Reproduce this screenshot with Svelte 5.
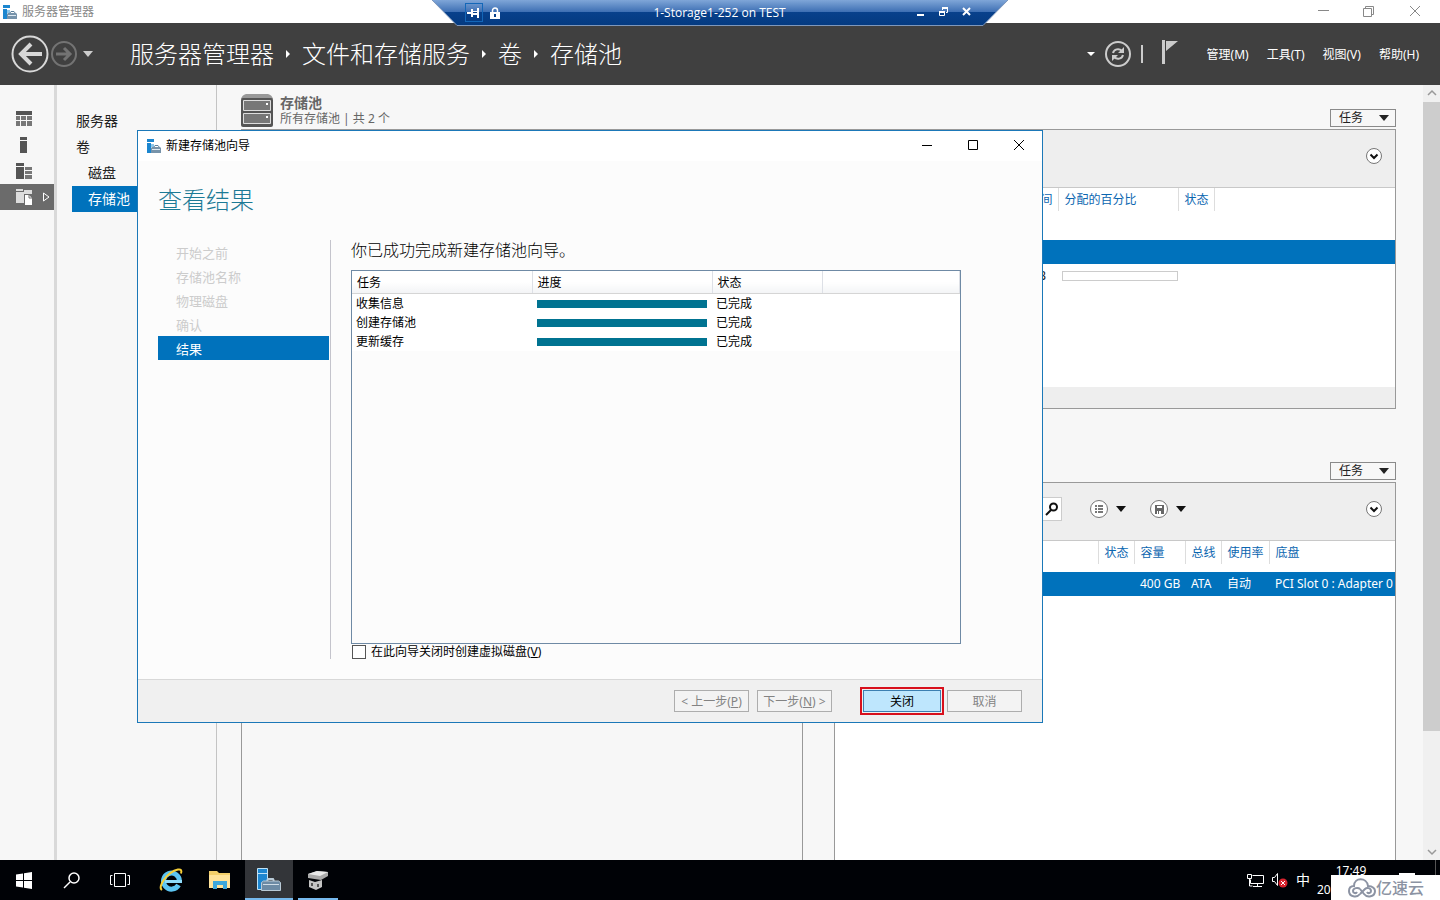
<script lang="ts">
	const crumbs = ['服务器管理器', '文件和存储服务', '卷', '存储池'];
	const menus = ['管理(M)', '工具(T)', '视图(V)', '帮助(H)'];
	const navItems = [
		{ label: '服务器' },
		{ label: '卷' },
		{ label: '磁盘', sub: true },
		{ label: '存储池', sub: true, active: true }
	];
	const steps = ['开始之前', '存储池名称', '物理磁盘', '确认', '结果'];
	const tasks = [
		{ name: '收集信息', progress: 100, status: '已完成' },
		{ name: '创建存储池', progress: 100, status: '已完成' },
		{ name: '更新缓存', progress: 100, status: '已完成' }
	];
	let createDisk = $state(false);
</script>

{#snippet managerIcon()}
	<svg class="app-icon" width="16" height="16" viewBox="0 0 16 16" aria-hidden="true">
		<path d="M1 1h7v3H1zM1 5h4v10H1z" fill="#1c86cf" />
		<path d="M5 6h3v3H5z" fill="#8cc6ea" />
		<path d="M7.500 9.500 9 7.500h3l1.500 2" fill="none" stroke="#5b7f9b" />
		<path d="m5 10 1-1h8l1 1v5H5z" fill="#7793aa" />
		<path d="M6 11.500h8" stroke="#dce8f1" />
	</svg>
{/snippet}

{#snippet chevron()}
	<button class="bare" aria-label="折叠">
		<svg width="18" height="18" viewBox="0 0 18 18">
			<circle cx="9" cy="9" r="7.500" fill="#fff" stroke="#777" />
			<path d="M5.500 7.500 9 11l3.500-3.500" fill="none" stroke="#111" stroke-width="2" />
		</svg>
	</button>
{/snippet}

{#snippet taskMenu()}
	<button class="task-menu">任务 <i class="down"></i></button>
{/snippet}

<div class="desktop">
	<header class="titlebar">
		{@render managerIcon()}
		<span>服务器管理器</span>
		<div class="win-controls">
			<button class="bare" aria-label="最小化"><svg width="12" height="12"><path d="M1 4.500h11" stroke="#888" /></svg></button>
			<button class="bare" aria-label="还原">
				<svg width="12" height="12" fill="none" stroke="#888"><path d="M.5 2.500h8v8h-8zM2.500 2.500v-2h8v8h-2" /></svg>
			</button>
			<button class="bare" aria-label="关闭窗口"><svg width="12" height="12"><path d="m1 0 10 10M11 0 1 10" stroke="#888" /></svg></button>
		</div>
	</header>

	<div class="toolbar">
		<button class="bare" aria-label="后退">
			<svg width="38" height="38" viewBox="0 0 38 38" fill="none" stroke="#d8d8d8">
				<circle cx="19" cy="19" r="17.500" stroke-width="2" />
				<path d="M31 19H10" stroke-width="4" />
				<path d="m20 9-10 10 10 10" stroke-width="4" />
			</svg>
		</button>
		<button class="bare forward" aria-label="前进">
			<svg width="26" height="26" viewBox="0 0 26 26" fill="none" stroke="#737373">
				<circle cx="13" cy="13" r="12" stroke-width="2" />
				<path d="M5 13h14M13 7l6 6-6 6" stroke-width="3" />
			</svg>
		</button>
		<button class="bare history" aria-label="历史记录"><i class="down"></i></button>
		<nav class="crumbs" aria-label="位置">
			{#each crumbs as crumb, i (crumb)}
				{#if i > 0}<i class="right"></i>{/if}
				<a href="#{crumb}">{crumb}</a>
			{/each}
		</nav>
		<div class="actions">
			<i class="down small"></i>
			<button class="bare" aria-label="刷新">
				<svg width="26" height="26" viewBox="0 0 26 26" fill="none" stroke="#ccc">
					<circle cx="13" cy="13" r="12" stroke-width="2" />
					<path d="M8 12c1-4 6-5 9-2M18 14c-1 4-6 5-9 2" stroke-width="2" />
					<path d="M19 6v6h-6zM7 20v-6h6z" fill="#ccc" stroke="none" />
				</svg>
			</button>
			<i class="bar"></i>
			<button class="bare flag" aria-label="通知">
				<svg width="18" height="26" viewBox="0 0 18 26"><path d="M1 1h3v24H1zM5 2h12L5 12z" fill="#ccc" /></svg>
			</button>
		</div>
		<nav class="menus" aria-label="菜单">
			{#each menus as menu (menu)}
				<button class="bare">{menu}</button>
			{/each}
		</nav>
	</div>

	<div class="workspace">
		<nav class="rail" aria-label="角色">
			<a href="#dashboard" aria-label="仪表板">
				<svg width="16" height="16" fill="#777"><path d="M0 0h16v4H0z" fill="#555" /><path d="M0 5h4v4H0zM5 5h5v4H5zM11 5h5v4h-5zM0 10h4v5H0zM5 10h5v5H5zM11 10h5v5h-5z" /></svg>
			</a>
			<a href="#local" aria-label="本地服务器">
				<svg width="16" height="16" fill="#555"><path d="M4 0h7v3H4zM4 4h7v12H4z" /></svg>
			</a>
			<a href="#all" aria-label="所有服务器">
				<svg width="16" height="16" fill="#555"><path d="M0 0h8v3H0zM0 4h8v12H0z" /><path d="M9 4h7v3H9zM9 8h7v3H9zM9 12h7v4H9z" fill="#777" /></svg>
			</a>
			<a href="#storage" class="active" aria-label="文件和存储服务">
				<svg width="16" height="16" fill="#ddd"><path d="M0 0h7v2H0zM0 3h8v11H0zM8 1h8v4H8z" /><path d="M9 6h4l3 3v7H9z" fill="#fff" /><path d="M13 6v3h3" fill="none" stroke="#707070" /></svg>
				<svg class="expand" width="8" height="10"><path d="M1.500 1v8L7 5z" fill="none" stroke="#fff" /></svg>
			</a>
		</nav>

		<nav class="side" aria-label="导航">
			{#each navItems as item (item.label)}
				<a href="#{item.label}" class:sub={item.sub} class:active={item.active}>{item.label}</a>
			{/each}
		</nav>

		<main class="content">
			<section class="tile wide">
				<div class="tile-head">
					<svg width="32" height="33" viewBox="0 0 32 33">
						<path d="M5 0h22q4 1 5 5H0q1-4 5-5z" fill="#999" />
						<rect y="4" width="32" height="29" rx="2" fill="#555" />
						<path d="M2.500 6.500h27v10h-27zM2.500 19.500h27v10h-27z" fill="#777" stroke="#ddd" />
						<path d="M25 9h2v2h-2zM25 22h2v2h-2z" fill="#fff" />
					</svg>
					<div class="tile-title">
						<h2>存储池</h2>
						<p>所有存储池 | 共 2 个</p>
					</div>
					{@render taskMenu()}
				</div>
				<div class="panel pools">
					<div class="panel-bar">{@render chevron()}</div>
					<table>
						<colgroup><col class="c-rest" /><col class="c-free" /><col class="c-share" /><col class="c-state" /><col /></colgroup>
						<thead>
							<tr><th></th><th class="end">可用空间</th><th>分配的百分比</th><th>状态</th><th class="last"></th></tr>
						</thead>
						<tbody>
							<tr class="group"><td colspan="5"></td></tr>
							<tr class="selected"><td></td><td></td><td></td><td></td><td></td></tr>
							<tr><td></td><td class="end">398 GB</td><td class="share"><div class="meter"></div></td><td></td><td></td></tr>
						</tbody>
					</table>
					<div class="panel-foot"></div>
				</div>
			</section>

			<section class="tile">
				<div class="tile-head"></div>
				<div class="panel plain"></div>
			</section>

			<section class="tile">
				<div class="tile-head">{@render taskMenu()}</div>
				<div class="panel disks">
					<div class="panel-bar">
						<label class="search">
							<input type="text" aria-label="筛选器" />
							<svg width="14" height="14" fill="none" stroke="#111"><circle cx="8.500" cy="5" r="3.500" stroke-width="2" /><path d="m6 8-5 5" stroke-width="2" /></svg>
						</label>
						<button class="bare split" aria-label="分组">
							<svg width="20" height="20"><circle cx="10" cy="10" r="8.500" fill="#fff" stroke="#777" /><path d="M6 6h2v2H6zM9 6h5v2H9zM6 9h2v2H6zM9 9h5v2H9zM6 12h2v2H6zM9 12h5v2H9z" fill="#777" /></svg>
							<i class="down"></i>
						</button>
						<button class="bare split" aria-label="保存查询">
							<svg width="20" height="20"><circle cx="10" cy="10" r="8.500" fill="#fff" stroke="#777" /><path d="M6 6h9v9H6z" fill="#666" /><path d="M8 7h5v2H8zM8 12h1v3H8zM10 12h2v3h-2z" fill="#fff" /></svg>
							<i class="down"></i>
						</button>
						{@render chevron()}
					</div>
					<table>
						<colgroup><col class="d-rest" /><col class="d-36" /><col class="d-51" /><col class="d-36" /><col class="d-48" /><col /></colgroup>
						<thead>
							<tr><th></th><th>状态</th><th>容量</th><th>总线</th><th>使用率</th><th class="last">底盘</th></tr>
						</thead>
						<tbody>
							<tr class="selected"><td></td><td></td><td>400 GB</td><td>ATA</td><td>自动</td><td>PCI Slot 0 : Adapter 0</td></tr>
						</tbody>
					</table>
				</div>
			</section>
		</main>

		<div class="scrollbar" aria-hidden="true">
			<svg width="17" height="17"><path d="m5 10 4-4 4 4" fill="none" stroke="#999" stroke-width="1.500" /></svg>
			<div class="thumb"></div>
			<div class="track"></div>
			<svg width="17" height="17"><path d="m5 7 4 4 4-4" fill="none" stroke="#999" stroke-width="1.500" /></svg>
		</div>
	</div>

	<footer class="taskbar">
		<div class="system">
			<button class="bare" aria-label="开始">
				<svg width="18" height="18" fill="#fff"><path d="m1 3.500 7-1V9H1zM9 2.300 17 1v8H9zM1 10h7v6.500l-7-1zM9 10h8v8l-8-1.300z" /></svg>
			</button>
			<button class="bare" aria-label="搜索">
				<svg width="18" height="18" fill="none" stroke="#fff" stroke-width="1.500"><circle cx="11" cy="7" r="5" /><path d="m7 11-6 6" /></svg>
			</button>
			<button class="bare" aria-label="任务视图">
				<svg width="22" height="16" fill="none" stroke="#fff"><path d="M5.500 1.500h11v13h-11zM3.500 3.500h-2v9h2M18.500 3.500h2v9h-2" /></svg>
			</button>
		</div>
		<button class="bare" aria-label="Internet Explorer">
			<svg width="24" height="24" fill="none">
				<path d="M19.500 17a8 8 0 1 1 1-4" stroke="#5cc5f2" stroke-width="5" />
				<path d="M6 13.500h17" stroke="#8fdcfa" stroke-width="3" />
				<path d="M3 22C-2 19 8 4 19 1.500c3-.5 4 1 3 4" stroke="#f6cf38" stroke-width="2" />
			</svg>
		</button>
		<button class="bare" aria-label="文件资源管理器">
			<svg width="24" height="22"><path d="M1 2h8l2 2h11v15H1z" fill="#f3cf6a" /><path d="M1 6h21v13H1z" fill="#ffe39a" /><path d="M5 20v-8h14v8h-4v-4H9v4z" fill="#3ba7dc" /></svg>
		</button>
		<button class="bare running current" aria-label="服务器管理器">
			<svg width="26" height="26"><path d="M1.500 1.500h10v21h-10z" fill="#1d86d0" stroke="#bfe2f7" /><path d="M2 6.500h9" stroke="#bfe2f7" /><path d="M11 14l1-2h5l1 2" fill="none" stroke="#b9cad6" stroke-width="2" /><path d="m5.500 15.500 2-1.500h15l2 1.500v8h-19z" fill="#6d8ba5" stroke="#b9cad6" /><path d="M7 17.500h16" stroke="#cfdce6" /></svg>
		</button>
		<button class="bare running" aria-label="存储">
			<svg width="24" height="22"><path d="m2 5 9-3 11 1v4l-7 4L2 9z" fill="#a9a9a9" /><path d="m2 5 9-3 11 1-8 4z" fill="#e8e8e8" /><path d="m3 11 6 2 7-2v7l-6 3-7-3z" fill="#c4c4c4" /><path d="M5 14h2v3H5zM11 15h2v3h-2z" fill="#555" /></svg>
		</button>
		<div class="tray">
			<svg width="17" height="15" fill="none" stroke="#fff"><path d="M5.500 2.500h11v8H3.500v-4M10.500 10v3M6 13.500h9M.5 1.500h4v4h-4zM2.500 6v7h3" /></svg>
			<svg width="18" height="16"><path d="M1.500 5.500h2l3-4v12l-3-4h-2z" fill="none" stroke="#fff" /><circle cx="12" cy="11" r="4.500" fill="#d9232e" /><path d="m10 9 4 4M14 9l-4 4" stroke="#fff" /></svg>
			<span class="ime">中</span>
			<div class="clock"><span class="time">17:49</span><span>20</span></div>
			<svg class="notice" width="16" height="14"><path d="M0 0h16v11h-5l-3 3v-3H0z" fill="#fff" /></svg>
			<button class="bare show-desktop" aria-label="显示桌面"></button>
		</div>
	</footer>

	<div class="remote">
		<svg class="remote-shape" viewBox="0 0 576 26" preserveAspectRatio="none" aria-hidden="true">
			<defs>
				<linearGradient id="remote-fill" x1="0" y1="0" x2="0" y2="1">
					<stop offset="0" stop-color="#7fa6d8" /><stop offset=".46" stop-color="#3f70b4" />
					<stop offset=".47" stop-color="#08418c" /><stop offset="1" stop-color="#043a80" />
				</linearGradient>
			</defs>
			<path d="M0 0h576l-25 25.500H25z" fill="url(#remote-fill)" />
			<path d="m0 0 25 25.500h526L576 0" fill="none" stroke="#7e97bb" />
		</svg>
		<div class="remote-row">
			<button class="bare pin" aria-label="固定"><svg width="14" height="12" fill="#fff"><path d="M0 5h5v2H0zM4 2h2v8H4zM6 4h4v1H6zM6 6h4v2H6zM10 1h2v10h-2z" /></svg></button>
			<button class="bare" aria-label="连接信息"><svg width="10" height="12"><path d="M2.500 6V3.500a2.500 2.500 0 0 1 5 0V6" fill="none" stroke="#fff" stroke-width="1.500" /><path d="M0 5h10v7H0z" fill="#fff" /><path d="M4 7h2v3H4z" fill="#08418c" /></svg></button>
			<span>1-Storage1-252 on TEST</span>
			<button class="bare" aria-label="最小化连接"><svg width="10" height="12"><path d="M1 7h7v2H1z" fill="#fff" /></svg></button>
			<button class="bare" aria-label="还原连接"><svg width="10" height="12" fill="none" stroke="#fff"><path d="M.5 4.500h5v4h-5zM3.500 3V1.500h5v4H7" /><path d="M0 5h6M3 1h6" stroke-width="2" /></svg></button>
			<button class="bare" aria-label="断开"><svg width="10" height="12"><path d="m1 1 7 7M8 1 1 8" stroke="#fff" stroke-width="2" /></svg></button>
		</div>
	</div>

	<div class="dialog" role="dialog" aria-labelledby="wizard-title">
		<div class="dialog-title">
			{@render managerIcon()}
			<span id="wizard-title">新建存储池向导</span>
			<div class="win-controls">
				<button class="bare" aria-label="最小化向导"><svg width="12" height="12"><path d="M1 5.500h10" stroke="#000" /></svg></button>
				<button class="bare" aria-label="最大化向导"><svg width="12" height="12"><path d="M1.500.5h9v9h-9z" fill="none" stroke="#000" /></svg></button>
				<button class="bare" aria-label="关闭向导"><svg width="12" height="12"><path d="m1 0 10 10M11 0 1 10" stroke="#000" /></svg></button>
			</div>
		</div>
		<h1>查看结果</h1>
		<div class="dialog-body">
			<ol class="steps">
				{#each steps as step, i (step)}
					<li class:active={i === steps.length - 1}>{step}</li>
				{/each}
			</ol>
			<div class="result">
				<p>你已成功完成新建存储池向导。</p>
				<div class="result-box">
					<table>
						<colgroup><col class="r-180" /><col class="r-180" /><col class="r-110" /><col /></colgroup>
						<thead>
							<tr><th>任务</th><th>进度</th><th>状态</th><th></th></tr>
						</thead>
						<tbody>
							{#each tasks as task (task.name)}
								<tr>
									<td>{task.name}</td>
									<td class="progress"><div class="fill" style="width: {task.progress}%"></div></td>
									<td>{task.status}</td>
									<td></td>
								</tr>
							{/each}
						</tbody>
					</table>
				</div>
				<label class="check"><input type="checkbox" bind:checked={createDisk} /><span>在此向导关闭时创建虚拟磁盘(<u>V</u>)</span></label>
			</div>
		</div>
		<div class="dialog-foot">
			<button disabled>&lt; 上一步(<u>P</u>)</button>
			<button disabled>下一步(<u>N</u>) &gt;</button>
			<div class="marked"><button class="primary">关闭</button></div>
			<button disabled>取消</button>
		</div>
	</div>

	<div class="watermark">
		<svg width="28" height="20" viewBox="0 0 28 20" fill="none" stroke="#8c93a3" stroke-width="2">
			<path d="M12 16c-3 4-11 3-11-3 0-3 2-5 5-5C6-1 19-1 20 8c5 0 7 3 7 5 0 6-8 7-11 3l-4-5" />
			<path d="M12 11c-2-2-7-1-7 2 0 2 3 3 4 1M12 16l5-5c2-2 6-1 6 2 0 2-3 3-4 1" />
		</svg>
		<span>亿速云</span>
	</div>
</div>

<style>
	:global(body) {
		margin: 0;
		background: #f7f7f7;
	}
	.desktop {
		position: relative;
		display: flex;
		flex-direction: column;
		height: 100vh;
		overflow: hidden;
		font-family: 'Noto Sans', 'Noto Sans CJK SC', sans-serif;
		font-size: 12px;
		line-height: 16px;
		color: #222;
	}
	h1,
	h2,
	p,
	ol {
		margin: 0;
		padding: 0;
		font-weight: 400;
	}
	a {
		color: inherit;
		text-decoration: none;
	}
	svg {
		display: block;
		flex: none;
	}
	button {
		font: inherit;
		color: inherit;
	}
	.bare {
		display: flex;
		align-items: center;
		justify-content: center;
		padding: 0;
		border: 0;
		background: none;
	}
	.down {
		border: 5px solid transparent;
		border-top: 6px solid currentColor;
		border-bottom: 0;
	}
	.down.small {
		border-width: 4px 4px 0;
	}
	.right {
		margin: 0 12px;
		border: 4px solid transparent;
		border-left: 4px solid #fff;
		border-right: 0;
	}

	/* main window */
	.titlebar {
		display: flex;
		align-items: center;
		gap: 4px;
		height: 23px;
		padding-left: 2px;
		background: #fff;
		color: #888;
	}
	.win-controls {
		display: flex;
		gap: 34px;
		margin-left: auto;
		padding-right: 19px;
	}
	.toolbar {
		display: flex;
		align-items: center;
		height: 62px;
		padding: 0 21px 0 11px;
		background: #404040;
		color: #fff;
	}
	.forward {
		margin-left: 2px;
	}
	.history {
		margin: 0 37px 0 6px;
		color: #ccc;
	}
	.crumbs {
		display: flex;
		align-items: center;
		font-size: 24px;
		font-weight: 300;
		line-height: 32px;
	}
	.actions {
		display: flex;
		align-items: center;
		gap: 10px;
		margin-left: auto;
		margin-right: 28px;
	}
	.bar {
		width: 2px;
		height: 18px;
		margin-right: 8px;
		background: #ccc;
	}
	.flag {
		padding-bottom: 4px;
	}
	.menus {
		display: flex;
		gap: 18px;
		padding-top: 2px;
	}
	.workspace {
		display: flex;
		flex: 1;
		min-height: 0;
		background: #f7f7f7;
	}
	.rail {
		width: 54px;
		padding-top: 21px;
		border-right: 3px solid #d9d9d9;
	}
	.rail a {
		display: flex;
		align-items: center;
		height: 26px;
		padding-left: 16px;
		box-sizing: border-box;
	}
	.rail .active {
		background: #6b6b6b;
	}
	.expand {
		margin-left: 10px;
	}
	.side {
		width: 144px;
		padding: 23px 0 0 15px;
		border-right: 1px solid #c4c4c4;
		font-size: 14px;
	}
	.side a {
		display: block;
		padding-left: 4px;
		line-height: 26px;
	}
	.side .sub {
		padding-left: 16px;
	}
	.side .active {
		background: #0072bc;
		color: #fff;
	}
	.content {
		flex: 1;
		display: grid;
		grid-template-columns: 1fr 1fr;
		grid-template-rows: auto 1fr;
		gap: 29px 31px;
		min-width: 0;
		padding: 0 27px 0 24px;
	}
	.tile {
		display: flex;
		flex-direction: column;
		min-width: 0;
	}
	.wide {
		grid-column: 1 / 3;
	}
	.tile-head {
		display: flex;
		align-items: flex-end;
		gap: 7px;
		height: 42px;
		padding-bottom: 2px;
		color: #666;
	}
	.tile-title h2 {
		font-size: 14px;
		font-weight: 700;
	}
	.task-menu {
		display: flex;
		align-items: center;
		justify-content: space-between;
		width: 66px;
		height: 18px;
		margin: 0 0 0 auto;
		padding: 0 6px 0 8px;
		border: 1px solid #8a8a8a;
		background: #f7f7f7;
		color: #222;
	}
	.panel {
		box-sizing: border-box;
		border: 1px solid #999;
		background: #fff;
		overflow: hidden;
	}
	.pools {
		display: flex;
		flex-direction: column;
		height: 280px;
	}
	.plain,
	.disks {
		flex: 1;
		border-bottom: 0;
	}
	.plain {
		background: #f7f7f7;
	}
	.panel-bar {
		display: flex;
		align-items: center;
		justify-content: flex-end;
		height: 51px;
		padding: 0 12px 6px 0;
		border-bottom: 1px solid #c8c8c8;
		background: #eee;
	}
	.panel-foot {
		height: 21px;
		margin-top: auto;
		background: #eee;
	}
	.panel table {
		width: 100%;
		table-layout: fixed;
		border-collapse: collapse;
	}
	.panel th,
	.panel td {
		padding: 0 0 0 6px;
		text-align: left;
		font-weight: 400;
		white-space: nowrap;
	}
	.panel th {
		height: 23px;
		color: #0b66b0;
		border-right: 1px solid #ddd;
	}
	.panel .last {
		border-right: 0;
	}
	.panel .end {
		padding: 0 5px 0 0;
		text-align: right;
	}
	.panel td.end {
		padding-right: 12px;
	}
	.panel tbody td {
		height: 24px;
	}
	.panel .group td {
		height: 29px;
	}
	.panel .selected {
		background: #0072bc;
		color: #fff;
	}
	.panel td.share {
		padding-left: 4px;
	}
	.meter {
		height: 8px;
		border: 1px solid #ccc;
	}
	.c-rest {
		width: 755px;
	}
	.c-free {
		width: 61px;
	}
	.c-share {
		width: 120px;
	}
	.c-state,
	.d-36 {
		width: 36px;
	}
	.d-rest {
		width: 263px;
	}
	.d-51 {
		width: 51px;
	}
	.d-48 {
		width: 48px;
	}
	.disks thead::after {
		content: '';
		display: block;
		height: 8px;
	}
	.search {
		display: flex;
		align-items: center;
		width: 207px;
		height: 22px;
		margin-right: 27px;
		padding-right: 2px;
		border: 1px solid #ccc;
		background: #fff;
	}
	.search input {
		flex: 1;
		min-width: 0;
		border: 0;
	}
	.split {
		gap: 7px;
		margin-right: 23px;
		color: #111;
	}
	.split + .bare:last-child {
		margin-left: 156px;
	}
	.scrollbar {
		display: flex;
		flex-direction: column;
		width: 17px;
		background: #f0f0f0;
	}
	.thumb {
		flex: 629;
		background: #cdcdcd;
	}
	.track {
		flex: 112;
	}

	/* taskbar */
	.taskbar {
		display: flex;
		gap: 1px;
		height: 40px;
		background: #000206;
		color: #fff;
	}
	.system {
		display: flex;
		margin-right: 2px;
	}
	.taskbar button {
		width: 48px;
	}
	.taskbar .running {
		position: relative;
	}
	.taskbar .running::after {
		content: '';
		position: absolute;
		inset: auto 4px 0;
		height: 2px;
		background: #76b9ed;
	}
	.taskbar .current {
		background: #333539;
	}
	.taskbar .current::after {
		inset: auto 0 0;
	}
	.tray {
		display: flex;
		align-items: center;
		gap: 7px;
		margin-left: auto;
	}
	.ime {
		font-size: 14px;
	}
	.clock {
		width: 68px;
		display: flex;
		flex-direction: column;
		line-height: 19px;
	}
	.time {
		text-align: center;
	}
	.notice {
		margin: 0 13px 0 7px;
	}
	.taskbar .show-desktop {
		align-self: stretch;
		width: 5px;
		border-left: 1px solid #555;
	}

	/* remote connection bar */
	.remote {
		position: absolute;
		top: 0;
		left: 30%;
		width: 40%;
		height: 26px;
		font-family: 'Open Sans', sans-serif;
		color: #fff;
	}
	.remote-shape {
		position: absolute;
		width: 100%;
		height: 100%;
	}
	.remote-row {
		position: relative;
		display: flex;
		align-items: center;
		gap: 13px;
		height: 25px;
		padding: 0 36px 0 33px;
	}
	.remote-row span {
		flex: 1;
		margin-left: 23px;
		text-align: center;
	}
	.remote .pin {
		width: 18px;
		height: 19px;
		margin-right: -6px;
		border: 1px solid #1467b8;
	}

	/* wizard */
	.dialog {
		position: absolute;
		top: 130px;
		left: 137px;
		display: flex;
		flex-direction: column;
		width: 904px;
		height: 591px;
		border: 1px solid #1b78b8;
		background: #fcfcfc;
		color: #000;
	}
	.dialog-title {
		display: flex;
		align-items: center;
		gap: 4px;
		height: 30px;
		padding-left: 8px;
		background: #fff;
	}
	.dialog-title .win-controls {
		padding-right: 17px;
	}
	.dialog h1 {
		padding: 22px 20px 23px;
		font-size: 24px;
		font-weight: 300;
		line-height: 34px;
		color: #1c7a96;
	}
	.dialog-body {
		display: flex;
		flex: 1;
		padding: 0 81px 20px 20px;
	}
	.steps {
		width: 171px;
		padding-right: 1px;
		border-right: 1px solid #c4c4cc;
		list-style: none;
		font-size: 13px;
		color: #ccc;
	}
	.steps li {
		padding: 2px 0 0 18px;
		line-height: 22px;
	}
	.steps .active {
		background: #0072bc;
		color: #fff;
	}
	.result {
		flex: 1;
		display: flex;
		flex-direction: column;
		margin-left: 20px;
	}
	.result p {
		font-size: 16px;
		font-weight: 300;
		line-height: 20px;
		padding-bottom: 10px;
	}
	.result-box {
		flex: 1;
		border: 1px solid #6f8aa5;
	}
	.result-box table {
		width: 100%;
		table-layout: fixed;
		border-collapse: collapse;
		background: #fff;
	}
	.result-box th,
	.result-box td {
		padding: 0 4px;
		text-align: left;
		font-weight: 400;
	}
	.result-box th {
		height: 20px;
		padding: 2px 4px 0 5px;
		border-right: 1px solid #dde0e6;
		border-bottom: 1px solid #d5d5d5;
		background: linear-gradient(#fff 50%, #f3f4f6);
	}
	.result-box td {
		height: 19px;
	}
	.result-box .progress {
		padding: 0 5px;
	}
	.r-180 {
		width: 180px;
	}
	.r-110 {
		width: 110px;
	}
	.fill {
		height: 8px;
		background: #007391;
	}
	.check {
		display: flex;
		align-items: center;
		gap: 5px;
		height: 15px;
	}
	.check input {
		appearance: none;
		width: 14px;
		height: 14px;
		margin: 0 0 0 1px;
		border: 1px solid #555;
		background: #fff;
	}
	.check input:checked {
		background: #0072bc;
	}
	.dialog-foot {
		display: flex;
		align-items: center;
		justify-content: flex-end;
		height: 42px;
		padding-right: 20px;
		border-top: 1px solid #d8d8d8;
		background: #f0f0f0;
	}
	.dialog-foot button {
		box-sizing: border-box;
		width: 75px;
		height: 22px;
		margin-left: 8px;
		padding: 1px 0 0;
		border: 1px solid #adadad;
		background: #f3f3f3;
		color: #838383;
		white-space: nowrap;
	}
	.marked {
		margin-left: 28px;
		padding: 1px;
		border: 2px solid #d8101c;
	}
	.marked + button {
		margin-left: 3px;
	}
	.dialog-foot .primary {
		display: block;
		width: 78px;
		margin: 0;
		border-color: #3c7fb1;
		background: #bee6fd;
		color: #000;
	}

	.watermark {
		position: absolute;
		right: 0;
		bottom: 0;
		display: flex;
		align-items: center;
		width: 92px;
		height: 25px;
		padding-left: 17px;
		background: #fff;
		color: #8c93a3;
		font-size: 16px;
		font-weight: 500;
	}
</style>
